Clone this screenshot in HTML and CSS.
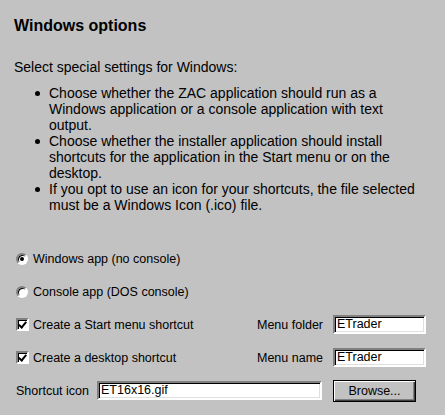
FILE: index.html
```html
<!DOCTYPE html>
<html lang="en">
<head>
    <meta charset="UTF-8">
    <meta name="viewport" content="width=device-width, initial-scale=1.0">
    <title>Windows options</title>
    <link rel="stylesheet" href="styles.css">
</head>
<body>
    <div class="panel">
        <h1>Windows options</h1>
        <p class="intro">Select special settings for Windows:</p>

        <ul class="notes">
            <li>Choose whether the ZAC application should run as a Windows application or a console application with text output.</li>
            <li>Choose whether the installer application should install shortcuts for the application in the Start menu or on the desktop.</li>
            <li>If you opt to use an icon for your shortcuts, the file selected must be a Windows Icon (.ico) file.</li>
        </ul>

        <div class="options">
            <div class="row">
                <label class="choice"><span class="radio checked"></span>Windows app (no console)</label>
            </div>
            <div class="row">
                <label class="choice"><span class="radio"></span>Console app (DOS console)</label>
            </div>
            <div class="row">
                <label class="choice"><span class="check checked"></span>Create a Start menu shortcut</label>
                <span class="field-label">Menu folder</span>
                <span class="field">ETrader</span>
            </div>
            <div class="row">
                <label class="choice"><span class="check checked"></span>Create a desktop shortcut</label>
                <span class="field-label">Menu name</span>
                <span class="field">ETrader</span>
            </div>
            <div class="row icon-row">
                <span class="icon-label">Shortcut icon</span>
                <span class="field">ET16x16.gif</span>
                <button class="browse">Browse...</button>
            </div>
        </div>
    </div>
</body>
</html>
```

FILE: styles.css
```css
body {
    margin: 0;
    font-family: "Liberation Sans", Arial, sans-serif;
    font-size: 14px;
    color: #000;
    background-color: #c2c2c2;
}
.panel {
    width: 445px;
    height: 415px;
    box-sizing: border-box;
    padding: 16px 0 0 14px;
    overflow: hidden;
}
h1 {
    margin: 0;
    font-size: 16px;
    line-height: 20px;
    font-weight: bold;
}
.intro {
    margin: 23px 0 0 0;
    line-height: 16px;
}
.notes {
    margin: 10px 0 0 0;
    padding: 0 0 0 35px;
    width: 380px;
    line-height: 16px;
    list-style: none;
}
.notes li {
    position: relative;
}
.notes li::before {
    content: "";
    position: absolute;
    left: -14px;
    top: 6px;
    width: 5px;
    height: 5px;
    border-radius: 50%;
    background: #000;
}
.options {
    margin-top: 29px;
    display: grid;
    grid-auto-rows: 33px;
    font-size: 12.5px;
}
.row {
    display: grid;
    grid-template-columns: 1fr auto 93px;
    column-gap: 10px;
    align-items: center;
    padding-right: 19px;
}
.choice {
    display: flex;
    align-items: center;
    padding-left: 2px;
}
.radio {
    width: 8px;
    height: 8px;
    margin-right: 5px;
    border-radius: 50%;
    background: #fff;
    border: 2px solid;
    border-color: #808080 #fff #fff #808080;
    box-shadow: inset 1px 1px 0 #000;
    position: relative;
}
.radio.checked::after {
    content: "";
    position: absolute;
    left: 2px;
    top: 2px;
    width: 4px;
    height: 4px;
    border-radius: 50%;
    background: #000;
}
.check {
    width: 9px;
    height: 9px;
    margin-right: 4px;
    background: #fff;
    border: 2px solid;
    border-color: #808080 #fff #fff #808080;
    box-shadow: inset 1px 1px 0 #000;
    position: relative;
}
.check.checked::after {
    content: "";
    position: absolute;
    left: 2px;
    top: 0;
    width: 3px;
    height: 6px;
    border: solid #000;
    border-width: 0 2px 2px 0;
    transform: rotate(40deg);
}
.field-label {
    text-align: right;
}
.field {
    height: 15px;
    line-height: 15px;
    padding-left: 2px;
    background: #fff;
    border: 2px solid;
    border-color: #808080 #fff #fff #808080;
    box-shadow: inset 1px 1px 0 #000, inset -1px -1px 0 #dfdfdf;
}
.icon-row {
    grid-template-columns: 70px 225px 83px;
    column-gap: 11px;
    padding-left: 2px;
    padding-right: 0;
}
.icon-label {
    white-space: nowrap;
}
.browse {
    height: 22px;
    padding: 0;
    font-family: inherit;
    font-size: 12.5px;
    color: #000;
    background: #c2c2c2;
    border: 1px solid #000;
    box-shadow: inset 1px 1px 0 #fff, inset -1px -1px 0 #404040, inset -2px -2px 0 #808080;
}
```
